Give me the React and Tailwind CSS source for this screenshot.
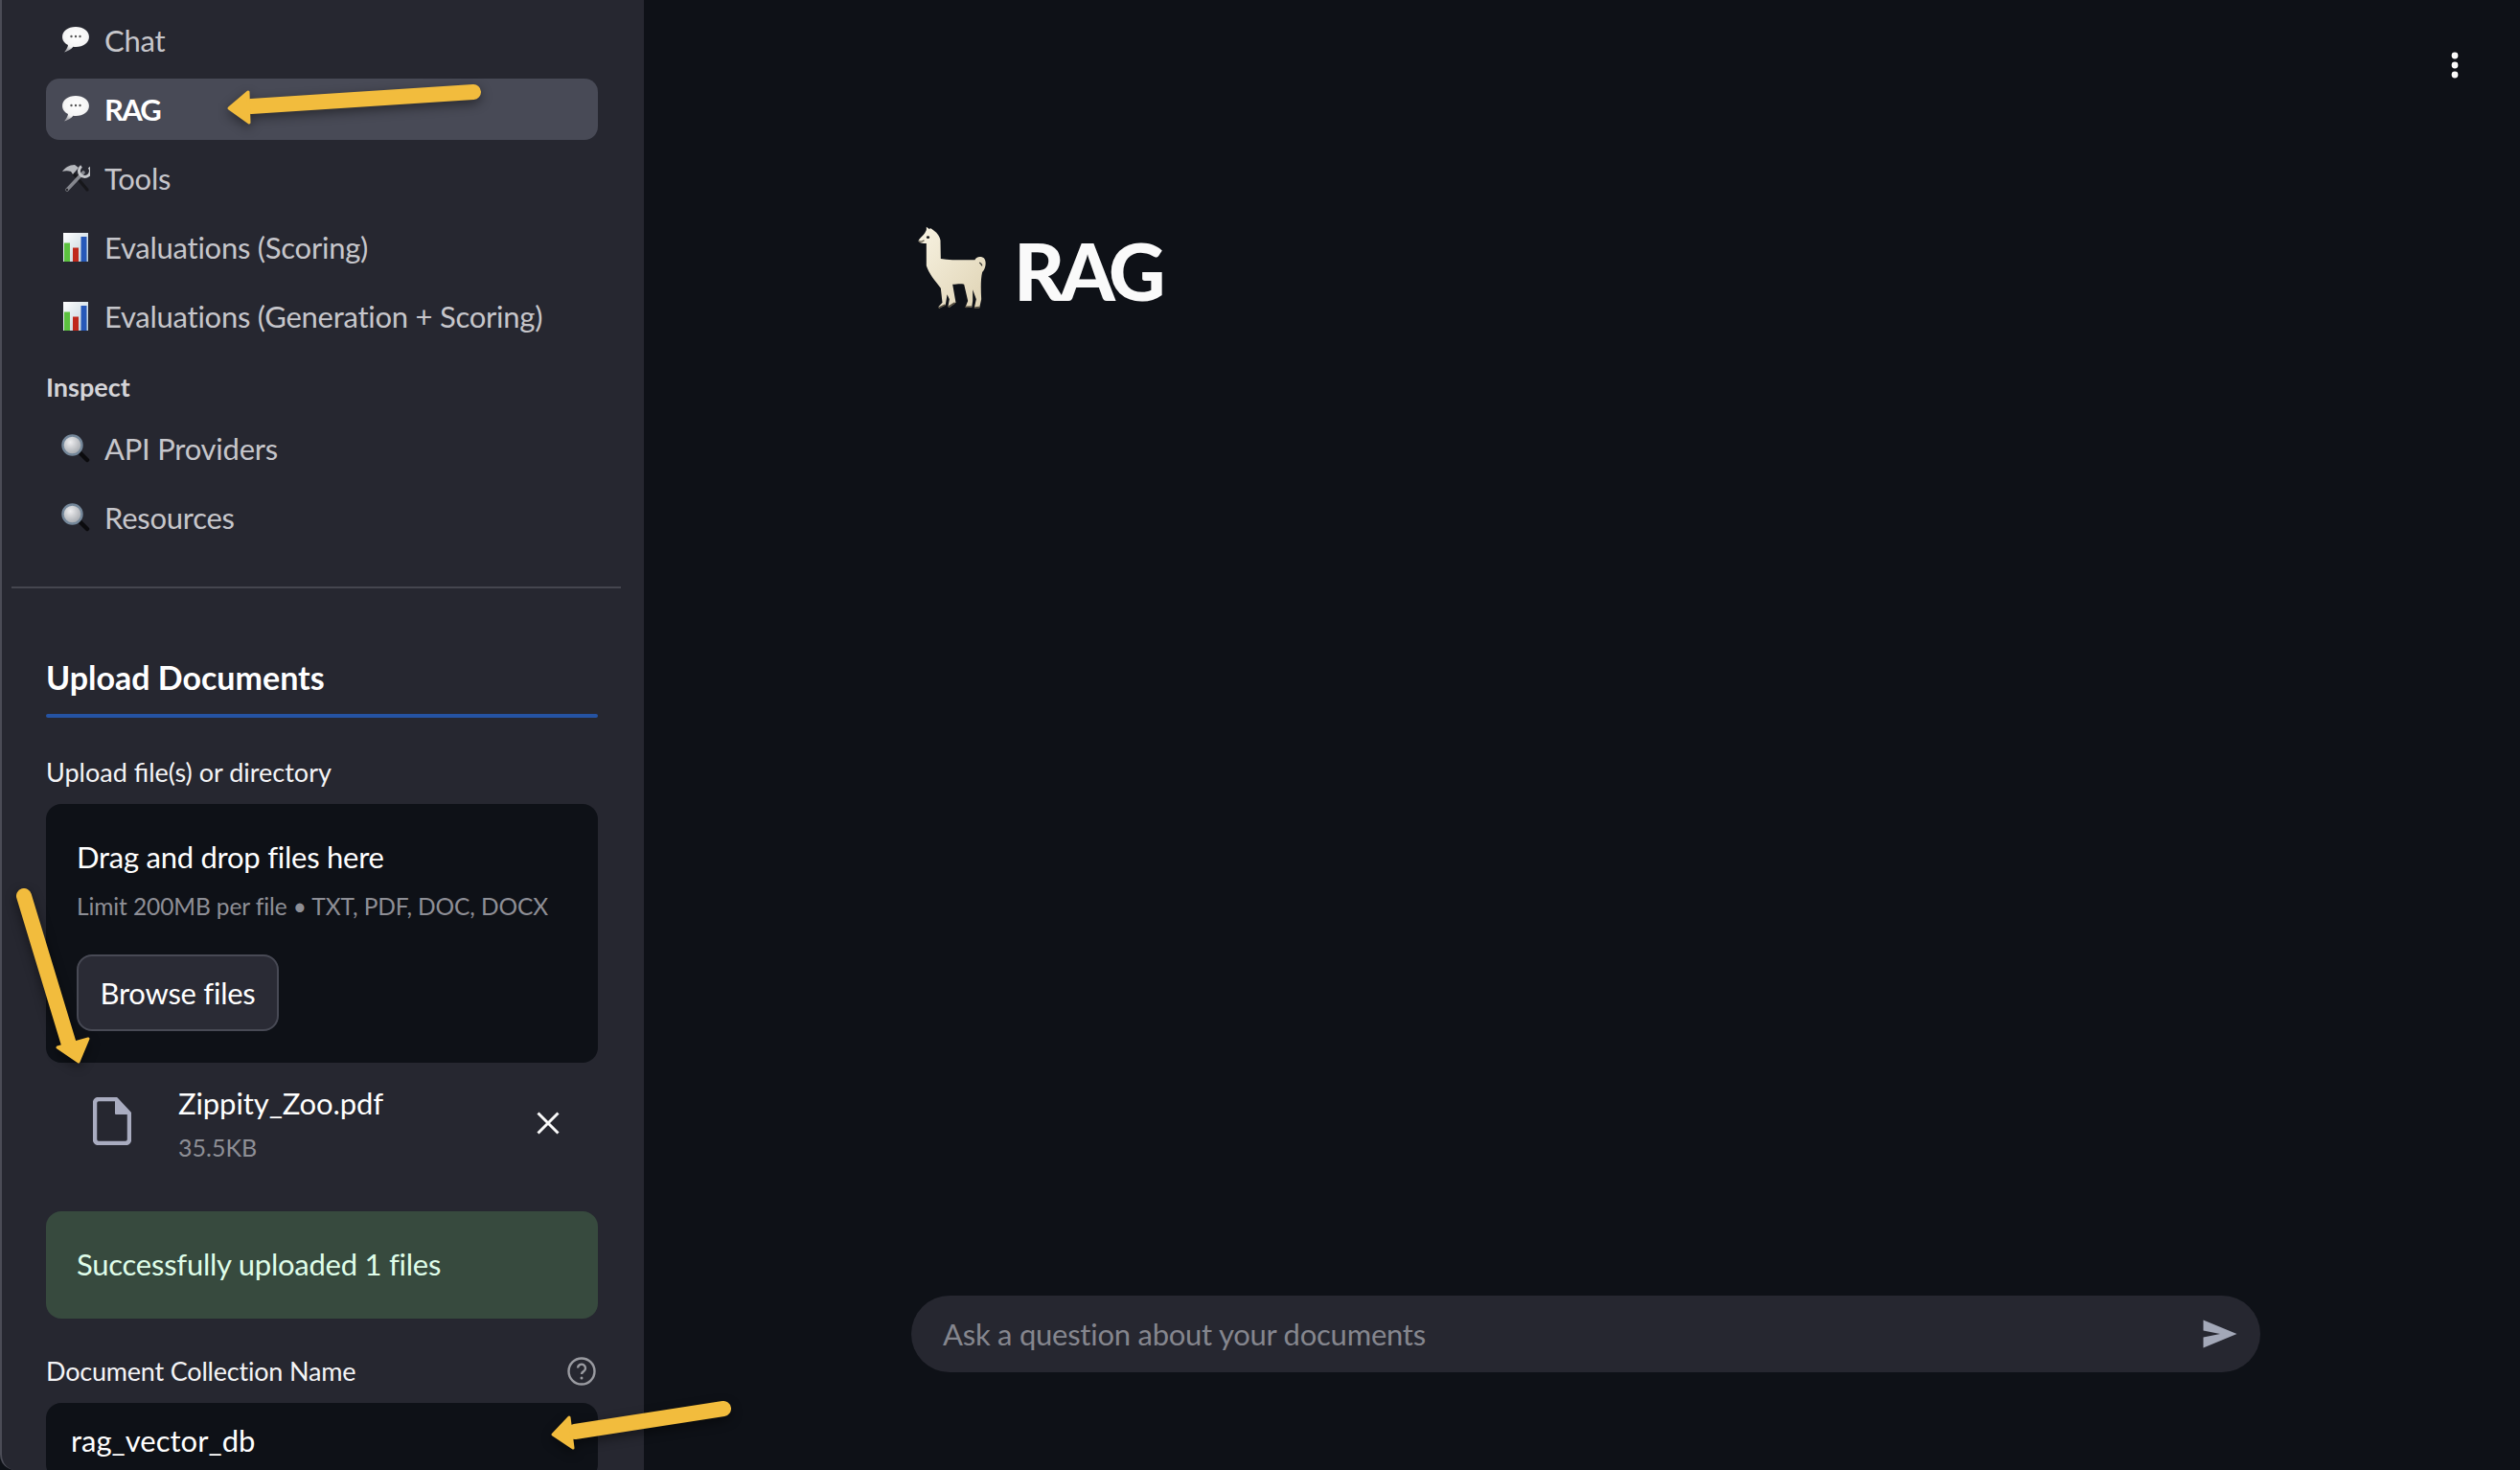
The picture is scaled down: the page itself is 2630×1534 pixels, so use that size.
import React from 'react';

const Bubble = () => (
  <svg width="30" height="30" viewBox="0 0 30 30" className="shrink-0">
    <defs>
      <radialGradient id="bubbleFill" cx="50%" cy="38%" r="62%">
        <stop offset="0%" stopColor="#ffffff" />
        <stop offset="72%" stopColor="#f4f4f4" />
        <stop offset="100%" stopColor="#a9a9ae" />
      </radialGradient>
    </defs>
    <path d="M15 1C7 1 1 5.500 1 11.500c0 3.800 2.400 6.800 6 8.500-.4 2.600-2 5-4 7.500 3.800-.8 7.200-3 9.400-5.700.8.100 1.700.2 2.600.2 8 0 14-4.600 14-10.500S23 1 15 1z" fill="url(#bubbleFill)" />
    <circle cx="10.500" cy="11" r="1.200" fill="#555" />
    <circle cx="15" cy="11" r="1.200" fill="#555" />
    <circle cx="19.500" cy="11" r="1.200" fill="#555" />
  </svg>
);

const Tools = () => (
  <svg width="30" height="30" viewBox="0 0 30 30" className="shrink-0">
    <path d="M11 8l16 19" stroke="#17171b" strokeWidth="3.200" strokeLinecap="round" />
    <path d="M1 8C4 4 8 1 14 1l4 3-6 7-2-3C7 7 4 7 1 8z" fill="#b7b9be" />
    <path d="M23 9L6 27" stroke="#85878e" strokeWidth="3.600" strokeLinecap="round" />
    <circle cx="6" cy="27" r="1.200" fill="#2a2a30" />
    <path d="M29 3.500A6 6 0 1 1 21 2.500" fill="none" stroke="#c4c6ca" strokeWidth="3" />
  </svg>
);

const Chart = () => (
  <svg width="26" height="30" viewBox="0 0 26 30" className="ml-0.5 shrink-0">
    <defs>
      <linearGradient id="chartBg" x1="0" y1="0" x2="1" y2="1">
        <stop offset="0%" stopColor="#ffffff" />
        <stop offset="100%" stopColor="#b9ccd6" />
      </linearGradient>
    </defs>
    <rect x="0" y="0" width="26" height="30" fill="url(#chartBg)" />
    <rect x="1" y="10.500" width="6" height="19.500" fill="#5cc13f" />
    <rect x="10" y="15.500" width="6" height="14.500" fill="#c0281c" />
    <rect x="18.500" y="4" width="6" height="26" fill="#2658b8" />
  </svg>
);

const Magnifier = () => (
  <svg width="30" height="30" viewBox="0 0 30 30" className="shrink-0">
    <defs>
      <radialGradient id="lensFill" cx="40%" cy="35%" r="70%">
        <stop offset="0%" stopColor="#eeeef0" />
        <stop offset="100%" stopColor="#9ea2a8" />
      </radialGradient>
    </defs>
    <path d="M18 18l9 9" stroke="#0b0b0e" strokeWidth="4.500" strokeLinecap="round" />
    <circle cx="11.500" cy="11.500" r="10" fill="url(#lensFill)" stroke="#74879a" strokeWidth="2.400" />
  </svg>
);

const Llama = () => (
  <svg width="77" height="90" viewBox="105 100 230 270" className="shrink-0">
    <defs>
      <linearGradient id="llamaBody" x1="0" y1="0" x2="1" y2="1">
        <stop offset="0%" stopColor="#f8f3e2" />
        <stop offset="100%" stopColor="#dfd3b4" />
      </linearGradient>
    </defs>
    <path d="M140 108L150 116L152 112C165 120 180 130 184 150L185 208C215 213 260 212 292 212C294 202 310 198 320 206C330 218 325 240 315 250C310 270 310 300 312 335L306 362L290 362L296 335L285 305L285 340L282 360L262 360L270 340L258 288C245 285 235 288 222 288L232 345L212 360L208 357L212 335L205 320L200 352L180 363L178 358L190 345L185 300C165 275 148 255 140 230L140 160C128 160 118 160 115 152C118 145 130 135 135 128L140 118Z" fill="url(#llamaBody)" />
    <ellipse cx="145" cy="141" rx="5" ry="4" fill="#1c1c1c" />
    <path d="M116 153C122 156 128 154 133 150" stroke="#5f5849" strokeWidth="4" fill="none" />
    <path d="M306 220C310 222 313 225 314 230" stroke="#33332f" strokeWidth="4" fill="none" />
    <path d="M180 361L198 353M210 358L228 347M264 359L280 358M292 361L305 360" stroke="#575042" strokeWidth="5" strokeLinecap="round" />
  </svg>
);

const NavItem = ({ icon, label, active }) => (
  <div className={`h-16 mx-12 rounded-[14px] flex items-center ${active ? 'bg-[#484a56] text-white font-bold' : 'text-[#c6c6cb]'}`}>
    <div className="w-[61px] pl-4 flex items-center">{icon}</div>
    <span className={`text-[31px] ${active ? 'tracking-[-1.800px]' : 'tracking-[-0.25px]'}`}>{label}</span>
  </div>
);

const Arrow = ({ className, viewBox, tail, head }) => (
  <svg className={`absolute pointer-events-none drop-shadow-[0_4px_6px_rgba(0,0,0,0.45)] ${className}`} viewBox={viewBox}>
    <path d={tail} stroke="#f2bc3d" strokeWidth="16" strokeLinecap="round" fill="none" />
    <path d={head} fill="#f2bc3d" stroke="#f2bc3d" strokeWidth="3" strokeLinejoin="round" />
  </svg>
);

export default function App() {
  return (
    <div className="relative w-[2630px] h-[1534px] flex overflow-hidden bg-[#0e1117] font-['Lato','Liberation_Sans',sans-serif]">
      {/* Sidebar */}
      <div className="w-[672px] h-full shrink-0 overflow-hidden bg-[#262730] border-l-2 border-[#4b4c56] rounded-bl-[16px]">
        <div className="-ml-0.5 pt-2.5 flex flex-col gap-2">
          <NavItem icon={<Bubble />} label="Chat" />
          <NavItem icon={<Bubble />} label="RAG" active />
          <NavItem icon={<Tools />} label="Tools" />
          <NavItem icon={<Chart />} label="Evaluations (Scoring)" />
          <NavItem icon={<Chart />} label="Evaluations (Generation + Scoring)" />
        </div>
        <div className="-ml-0.5 mt-[22px] pl-12 h-[40px] flex items-center text-[27px] font-bold text-[#d4d4d8]">Inspect</div>
        <div className="-ml-0.5 mt-3 flex flex-col gap-2">
          <NavItem icon={<Magnifier />} label="API Providers" />
          <NavItem icon={<Magnifier />} label="Resources" />
        </div>
        <div className="ml-2.5 w-[636px] h-0.5 mt-10 bg-[#45464f]" />

        <div className="-ml-0.5 px-12">
          <div className="mt-[70px] h-[44px] flex items-center text-[34px] font-bold text-white">Upload Documents</div>
          <div className="mt-[17px] h-1 rounded-sm bg-[#2553a3]" />
          <div className="mt-[39px] h-[36px] flex items-center text-[27px] text-[#f4f4f6]">Upload file(s) or directory</div>

          <div className="mt-[15px] h-[270px] rounded-2xl bg-[#0e1117] pl-8 pt-[35px]">
            <div className="h-10 flex items-center text-[31px] tracking-[-0.25px] text-white">Drag and drop files here</div>
            <div className="mt-[12px] h-10 flex items-center whitespace-nowrap text-[24.500px] tracking-[-0.1px] text-[#8e8f96]">Limit 200MB per file • TXT, PDF, DOC, DOCX</div>
            <div className="mt-[30px] w-[211px] h-20 rounded-2xl border-2 border-[#484a55] bg-[#2a2b35] flex items-center justify-center text-[31px] tracking-[-0.25px] text-white">Browse files</div>
          </div>

          <div className="h-[155px] flex items-start">
            <svg width="40" height="50" viewBox="0 0 40 50" className="ml-[49px] mt-[36px] shrink-0">
              <path d="M7 2H24L38 17V44a4 4 0 0 1-4 4H6a4 4 0 0 1-4-4V6a4 4 0 0 1 4-4z" fill="none" stroke="#a9acc0" strokeWidth="4.500" strokeLinejoin="round" />
              <path d="M24 2V17H38z" fill="#a9acc0" stroke="#a9acc0" strokeWidth="2" strokeLinejoin="round" />
            </svg>
            <div className="ml-[49px] mt-[22px] flex flex-col">
              <div className="h-10 flex items-center text-[31px] tracking-[-0.1px] text-white">Zippity_Zoo.pdf</div>
              <div className="mt-[7px] h-10 flex items-center text-[25px] text-[#8e8f96]">35.5KB</div>
            </div>
            <svg width="24" height="24" viewBox="0 0 24 24" className="ml-auto mr-10 mt-[51px] shrink-0">
              <path d="M1.500 1.500l21 21M22.500 1.500l-21 21" stroke="#fafafa" strokeWidth="3" />
            </svg>
          </div>

          <div className="h-[112px] rounded-2xl bg-[#374a3e] pl-8 pb-0.5 flex items-center text-[31px] tracking-[-0.25px] text-[#dffde9]">Successfully uploaded 1 files</div>

          <div className="mt-[37px] h-[36px] flex items-center justify-between text-[27px] tracking-[-0.2px] text-[#f4f4f6]">
            <span>Document Collection Name</span>
            <svg width="30" height="30" viewBox="0 0 30 30" className="mr-0.5 shrink-0">
              <circle cx="15" cy="15" r="13.500" fill="none" stroke="#9a9ba1" strokeWidth="2.400" />
              <path d="M11 11.500a4 4 0 1 1 6 3.600c-1.400.8-2 1.500-2 3" fill="none" stroke="#9a9ba1" strokeWidth="2.400" />
              <circle cx="15" cy="22" r="1.500" fill="#9a9ba1" />
            </svg>
          </div>
          <div className="mt-[15px] h-[80px] rounded-2xl bg-[#0e1117] pl-[26px] pb-0.5 flex items-center text-[31px] text-white">rag_vector_db</div>
        </div>
      </div>

      {/* Main */}
      <div className="flex-1 h-full flex flex-col">
        <div className="flex justify-end pr-[63px] pt-[54px]">
          <svg width="10" height="28" viewBox="0 0 10 28">
            <circle cx="5" cy="4" r="3.400" fill="#fafafa" />
            <circle cx="5" cy="14" r="3.400" fill="#fafafa" />
            <circle cx="5" cy="24" r="3.400" fill="#fafafa" />
          </svg>
        </div>
        <div className="ml-[283px] mt-[152px] flex items-center h-[90px]">
          <Llama />
          <span className="ml-[26px] mt-[6px] text-[82px] tracking-[-5px] font-black leading-none text-[#fafafa]">RAG</span>
        </div>
        <div className="mt-auto mb-[102px] ml-[279px] w-[1408px] h-20 rounded-[40px] bg-[#262730] flex items-center pl-[33px] pr-6">
          <span className="text-[31px] tracking-[-0.25px] text-[#85868e]">Ask a question about your documents</span>
          <svg width="36" height="30" viewBox="0 0 36 30" className="ml-auto shrink-0">
            <path d="M0.500 0.500L35.500 15 0.500 29.500V18.500L18 15 0.500 11.500z" fill="#a3a8b8" />
          </svg>
        </div>
      </div>

      {/* Annotation arrows */}
      <Arrow className="left-[230px] top-[80px] w-[290px] h-[60px]" viewBox="230 80 290 60" tail="M494 96L262 111" head="M239 113L259 96L260 128z" />
      <Arrow className="left-[10px] top-[920px] w-[100px] h-[200px]" viewBox="10 920 100 200" tail="M25 935L72 1090" head="M82 1108L60 1093L92 1084z" />
      <Arrow className="left-[565px] top-[1455px] w-[200px] h-[70px]" viewBox="565 1455 200 70" tail="M755 1470L600 1494" head="M577 1497L594 1479L598 1511z" />
    </div>
  );
}
